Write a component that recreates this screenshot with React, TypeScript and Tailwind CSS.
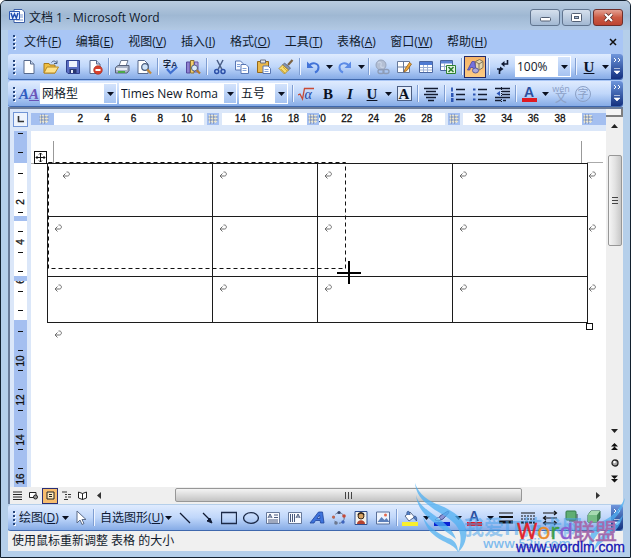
import { type ReactNode } from "react";

function Svg({ children, w = 16, h = 16 }: { children: ReactNode; w?: number; h?: number }) {
  return (
    <svg width={w} height={h} viewBox={`0 0 ${w} ${h}`} className="shrink-0" aria-hidden="true">
      {children}
    </svg>
  );
}

function Tool({ label, children, width = "w-[22px]" }: { label: string; children: ReactNode; width?: string }) {
  return (
    <button type="button" aria-label={label} className={`flex h-[22px] shrink-0 items-center justify-center ${width}`}>
      {children}
    </button>
  );
}

function Caret() {
  return (
    <Svg w={7} h={4}>
      <path d="M0 0h7L3.5 4z" fill="#0a1020" />
    </Svg>
  );
}

function Drop({ label }: { label: string }) {
  return (
    <Tool label={label} width="w-[10px]">
      <Caret />
    </Tool>
  );
}

function Sep() {
  return (
    <span className="flex w-[5px] shrink-0 justify-center">
      <span className="h-[17px] w-px bg-[#7f9ed2] shadow-[1px_0_0_#eef4ff]" />
    </span>
  );
}

function Grip() {
  return (
    <span className="mr-[2px] ml-[5px] flex w-[3px] shrink-0 flex-col gap-[2px]">
      {[0, 1, 2, 3].map((i) => (
        <span key={i} className="h-[2px] w-[2px] bg-[#27477e] shadow-[1px_1px_0_#f4f8ff]" />
      ))}
    </span>
  );
}

function Combo({ label, value, width }: { label: string; value: string; width: string }) {
  return (
    <label aria-label={label} className={`relative flex h-[21px] shrink-0 items-center bg-white ${width}`}>
      <select
        aria-label={label}
        className="h-[21px] w-full appearance-none bg-transparent pl-[2px] text-[12px] leading-normal text-[#10182a] outline-none"
      >
        <option>{value}</option>
      </select>
      <span className="pointer-events-none absolute top-px right-px bottom-px flex w-[12px] items-center justify-center bg-linear-to-b from-[#d3e3fc] to-[#a6c3f1]">
        <Caret />
      </span>
    </label>
  );
}

function Overflow() {
  return (
    <button
      type="button"
      aria-label="工具栏选项"
      className="ml-auto flex w-[12px] shrink-0 flex-col items-center justify-between self-stretch rounded-r-[3px] bg-linear-to-b from-[#6f96dc] to-[#14307f] py-[4px]"
    >
      <Svg w={8} h={5}>
        <path d="M1 0l2 2-2 2M5 0l2 2-2 2" fill="none" stroke="#fff" />
      </Svg>
      <Svg w={8} h={7}>
        <path d="M1 .5h6M1 3h6L4 6z" fill="#fff" stroke="#fff" strokeWidth=".6" />
      </Svg>
    </button>
  );
}

const barStyle =
  "flex items-center rounded-[3px] border-b border-[#3f68ad] bg-linear-to-b from-[#dfebfe] via-[#c0d7fa] to-[#86abe6]";

/* ---------- standard toolbar drawings ---------- */
const page = "M3 1.5h6.500l3.500 3.500v9.500H3z";

const NewIcon = () => (
  <Svg>
    <path d={page} fill="#fff" stroke="#56698c" />
    <path d="M9.500 1.500V5H13" fill="#c9d8ef" stroke="#56698c" />
  </Svg>
);
const OpenIcon = () => (
  <Svg>
    <path d="M1 4.500h5l1 1.500h5v8H1z" fill="#f0bf42" stroke="#a87a1c" />
    <path d="M1 14l3-6h11.500L12 14z" fill="#ffe28a" stroke="#b88a24" />
    <path d="M8.500 3.500c1.500-2 4-2 5 .5M14 1.500v3h-3" fill="none" stroke="#4b6185" />
  </Svg>
);
const SaveIcon = () => (
  <Svg>
    <path d="M1.500 1.500h13v13H3l-1.500-1.500z" fill="#5b6ec2" stroke="#2f3f8d" />
    <path d="M4 2h8v6H4z" fill="#eef2fd" />
    <path d="M4.500 10h7v4h-7z" fill="#28366f" />
    <path d="M6 11h2v3H6z" fill="#e8ecf8" />
  </Svg>
);
const PermissionIcon = () => (
  <Svg>
    <path d={page} fill="#fff" stroke="#56698c" />
    <path d="M9.500 1.500V5H13" fill="#c9d8ef" stroke="#56698c" />
    <circle cx="11" cy="11" r="4.300" fill="#d8402c" stroke="#a52716" strokeWidth=".6" />
    <path d="M8.500 11h5" stroke="#fff" strokeWidth="1.800" />
  </Svg>
);
const PrintIcon = () => (
  <Svg>
    <path d="M5 7l2-5.500h7L12 7z" fill="#fff" stroke="#6a7890" />
    <path d="M1.500 8.500L4 6.500h11v5l-2 2.500H1.500z" fill="#a9b3c6" stroke="#56617a" />
    <path d="M2 9h11v2H2z" fill="#e9edf5" />
    <path d="M4 12h7v2H4z" fill="#4ca848" />
  </Svg>
);
const PreviewIcon = () => (
  <Svg>
    <path d="M2 1.500h6.500l3.500 3.500v9.500H2z" fill="#fff" stroke="#56698c" />
    <circle cx="9" cy="8" r="3.300" fill="#cfe3f8" stroke="#465a7c" strokeWidth="1.200" />
    <path d="M11.300 10.500L15 14.500" stroke="#c58a36" strokeWidth="2.200" />
  </Svg>
);
const SpellIcon = () => (
  <Svg>
    <text x="0" y="8" fontSize="8" fontWeight="700" fontFamily="'Noto Sans CJK SC', sans-serif" fill="#101a33">字</text>
    <text x="8" y="9" fontSize="9" fontWeight="700" fontFamily="'Liberation Sans', sans-serif" fill="#1d3464">A</text>
    <path d="M4 10l3.500 4L14 8" fill="none" stroke="#3f6fd0" strokeWidth="2.200" />
  </Svg>
);
const ResearchIcon = () => (
  <Svg>
    <path d="M1.500 3h3.500v11H1.500z" fill="#8f80cf" stroke="#56489c" />
    <path d="M5.500 1.500H9V14H5.500z" fill="#f2cf70" stroke="#8d7233" />
    <path d="M9.500 3H13v10H9.500z" fill="#b4a6e2" stroke="#6455a4" />
    <circle cx="9.500" cy="9" r="3" fill="#d9ebfb" stroke="#4e5f80" />
    <path d="M11.700 11.300L15 14.500" stroke="#b5792c" strokeWidth="2.200" />
  </Svg>
);
const CutIcon = () => (
  <Svg>
    <path d="M5 1l5 9.500M11 1L6 10.500" stroke="#4b5f86" strokeWidth="1.500" />
    <circle cx="4.700" cy="12.500" r="2" fill="none" stroke="#2c50a8" strokeWidth="1.500" />
    <circle cx="11" cy="12.500" r="2" fill="none" stroke="#2c50a8" strokeWidth="1.500" />
  </Svg>
);
const CopyIcon = () => (
  <Svg>
    <path d="M1.500 2h5l2.500 2.500V11H1.500z" fill="#f4f8ff" stroke="#5877b4" />
    <path d="M7 5.500h5l2.500 2.500v6.500H7z" fill="#fff" stroke="#5877b4" />
    <path d="M8.500 9.500h4M8.500 11.500h4M3 5.500h3M3 7.500h3" stroke="#83a2d9" />
  </Svg>
);
const PasteIcon = () => (
  <Svg>
    <path d="M1.500 2.500h11v11h-11z" fill="#eab84a" stroke="#95691b" />
    <path d="M4.500 1h5v3h-5z" fill="#e2e6ee" stroke="#6a6f7c" />
    <path d="M7 7h5l2.500 2.500v5H7z" fill="#fff" stroke="#5877b4" />
    <path d="M8.500 10.500h4M8.500 12.500h4" stroke="#83a2d9" />
  </Svg>
);
const BrushIcon = () => (
  <Svg>
    <path d="M10 6l4.500-5" stroke="#7c6243" strokeWidth="2.200" />
    <path d="M6.500 4l6 5-2 2-6-5z" fill="#8492ad" stroke="#56637d" strokeWidth=".8" />
    <path d="M4.500 6l6 5-4 4L1 9.500z" fill="#f7dc6e" stroke="#ae8826" strokeWidth=".9" />
    <path d="M3 10l4 4M5 8l4 4" stroke="#c79d31" strokeWidth=".8" />
  </Svg>
);
const UndoIcon = () => (
  <Svg>
    <path d="M4 7c3-4.500 9.500-3 9.500 1.500 0 2-1.200 4-3.500 5" fill="none" stroke="#4273d8" strokeWidth="2" />
    <path d="M2 2.500V9h6.500z" fill="#4273d8" />
  </Svg>
);
const RedoIcon = () => (
  <Svg>
    <path d="M12 7C9 2.500 2.500 4 2.500 8.500c0 2 1.200 4 3.500 5" fill="none" stroke="#5c8be6" strokeWidth="2" />
    <path d="M14 2.500V9H7.500z" fill="#5c8be6" />
  </Svg>
);
const LinkIcon = () => (
  <Svg>
    <circle cx="7" cy="6" r="5" fill="#b4bfd3" stroke="#98a5bd" />
    <path d="M4 4c2-2 4 0 3 2s1 3 3 2" fill="none" stroke="#c9d4e6" strokeWidth="1.300" />
    <rect x="4" y="10.500" width="6" height="4" rx="2" fill="none" stroke="#8e9cb6" strokeWidth="1.300" />
    <rect x="9" y="10.500" width="6" height="4" rx="2" fill="none" stroke="#8e9cb6" strokeWidth="1.300" />
  </Svg>
);
const DrawTableIcon = () => (
  <Svg>
    <path d="M1.500 2.500h12v11h-12zM1.500 8h12M7.500 2.500v11" fill="#fff" stroke="#66799b" />
    <path d="M8 13l1-3 4.500-6.500 2 1.500-4.500 6.500z" fill="#f0a93b" stroke="#96601a" strokeWidth=".8" />
  </Svg>
);
const InsertTableIcon = () => (
  <Svg>
    <path d="M1.500 2.500h13v11h-13z" fill="#fff" stroke="#4a66a0" />
    <path d="M2 3h12v3H2z" fill="#4e7ad2" />
    <path d="M2 8.500h12M2 11h12M5.500 6v7M9.500 6v7" stroke="#9db1d6" />
  </Svg>
);
const ExcelIcon = () => (
  <Svg>
    <path d="M.5 1.500h12v10H.5z" fill="#fff" stroke="#4a66a0" />
    <path d="M1 2h11v2.500H1z" fill="#5e86d6" />
    <path d="M1 7.500h11M4.500 4v7" stroke="#9db1d6" />
    <path d="M6.500 6.500h9v8h-9z" fill="#e4f4e2" stroke="#2d8030" />
    <path d="M8.500 8l5 5M13.500 8l-5 5" stroke="#2d8030" strokeWidth="1.600" />
  </Svg>
);
const DrawingIcon = () => (
  <Svg w={18} h={17}>
    <path d="M9.500 3.500l4-2 3.500 2v6l-4.500 3-3.500-3z" fill="#e4d6ae" stroke="#85775a" />
    <path d="M9.500 3.500l3.500 2.500 4-2.500M13 6v6" fill="none" stroke="#85775a" />
    <path d="M1.500 12L6 3.500h2.500L10 12H7.500l-.5-2.500H4.500L3.800 12z" fill="#7472dc" stroke="#4b49a4" strokeWidth=".8" />
    <ellipse cx="9.500" cy="12.500" rx="3" ry="2.500" fill="#a9a8dc" stroke="#5a5a9a" />
  </Svg>
);
const MarksIcon = () => (
  <Svg>
    <path d="M13.500 1v4H9" fill="none" stroke="#101a33" strokeWidth="1.600" />
    <path d="M10.500 2v6L7 5z" fill="#101a33" />
    <path d="M7 10h-4M5.500 10v5" stroke="#101a33" strokeWidth="1.600" />
    <path d="M6 7.500v5L9.500 10z" fill="#101a33" />
  </Svg>
);

function Letter({ children, className = "" }: { children: ReactNode; className?: string }) {
  return <span className={`font-['Liberation_Serif',serif] text-[15px] leading-[16px] font-bold text-[#0b1224] ${className}`}>{children}</span>;
}

function ListIcon({ marks }: { marks: string }) {
  return (
    <Svg>
      <path d="M6 3.500h9M6 8.500h9M6 13.500h9" stroke="#141c30" strokeWidth="1.400" />
      <path d={marks} stroke="#2c55b4" strokeWidth="1.800" />
    </Svg>
  );
}

function ColorA() {
  return (
    <span className="flex w-[15px] flex-col items-center">
      <span className="font-['Liberation_Sans',sans-serif] text-[14px] leading-[12px] font-bold text-[#2c4f9e]">A</span>
      <span className="h-[4px] w-full bg-[#e01a22]" />
    </span>
  );
}

/* ---------- menu ---------- */
const menus: [string, string][] = [
  ["文件", "F"],
  ["编辑", "E"],
  ["视图", "V"],
  ["插入", "I"],
  ["格式", "O"],
  ["工具", "T"],
  ["表格", "A"],
  ["窗口", "W"],
  ["帮助", "H"],
];

/* ---------- rulers ---------- */
const rulerNumbers = ["2", "4", "6", "8", "10", "", "14", "16", "18", "20", "22", "24", "26", "28", "", "32", "34", "36", "38", "4"];
const sideNumbers = ["", "2", "4", "6", "", "10", "12", "14", "16"];

function ColumnMarker({ at }: { at: string }) {
  return (
    <span className={`absolute top-0 flex h-[12px] border-x-[3px] border-[#dbe7f9] bg-[#a4bff0] ${at}`}>
      <Svg w={12} h={12}>
        <path d="M2 2.500h8M2 5.500h8M2 8.500h8M2.500 2v8M5.500 2v8M8.500 2v8" stroke="#e8e4d0" strokeWidth="1.200" />
        <path d="M3.500 1v10M6.500 1v10M1 4h10M1 7h10" stroke="#7b87a0" strokeWidth=".6" />
      </Svg>
    </span>
  );
}

function Mark() {
  return (
    <Svg w={8} h={8}>
      <path d="M4.500 1h1c2.500 0 2.500 4 0 4H1M3.500 2.500L1 5l2.500 2.500" fill="none" stroke="#6c6c6c" />
    </Svg>
  );
}

function MoveHandle() {
  return (
    <button type="button" aria-label="移动表格" className="absolute top-[20px] left-[3px] border border-[#111] bg-white">
      <Svg w={11} h={11}>
        <path d="M5.500 1v9M1 5.500h9M4 2.500L5.500 1 7 2.500M4 8.500L5.500 10 7 8.500M2.500 4L1 5.500 2.500 7M8.500 4L10 5.500 8.500 7" fill="none" stroke="#111" />
      </Svg>
    </button>
  );
}

function Document() {
  const rows = ["h-[53px]", "h-[60px]", "h-[46px]"];
  return (
    <main className="relative min-w-0 flex-1 overflow-hidden bg-white pt-[32px] pl-[16px] text-[12px]">
      <span className="absolute top-[10px] left-[22px] h-[22px] w-px bg-[#999]" />
      <span className="absolute top-[32px] left-0 h-px w-[16px] bg-[#aaa]" />
      <span className="absolute top-[10px] right-[24px] h-[22px] w-px bg-[#999]" />
      <span className="absolute top-[31px] right-[3px] h-px w-[16px] bg-[#aaa]" />
      <MoveHandle />
      <table className="w-full table-fixed border-collapse">
        <colgroup>
          <col className="w-[165px]" />
          <col className="w-[105px]" />
          <col />
          <col />
          <col className="w-[19px]" />
        </colgroup>
        <tbody>
          {rows.map((height, r) => (
            <tr key={height} className={height}>
              {[0, 1, 2, 3].map((c) => (
                <td key={c} className={`border border-[#1c1c1c] pt-[7px] align-top ${r === 0 && c === 0 ? "pl-[14px]" : "pl-[6px]"}`}>
                  <Mark />
                </td>
              ))}
              <td className="pt-[7px] align-top">
                <Mark />
              </td>
            </tr>
          ))}
        </tbody>
      </table>
      <div className="pt-[7px] pl-[7px]">
        <Mark />
      </div>
      <span className="absolute top-[192px] right-[13px] h-[7px] w-[7px] border border-[#111] bg-white" />
      <svg className="absolute top-[30px] left-[16px]" width="316" height="124" aria-hidden="true">
        <rect x="1.500" y="1.500" width="297" height="106" fill="none" stroke="#111" strokeDasharray="4 3" />
        <path d="M302 100v23M290 112h24" stroke="#000" strokeWidth="2" />
      </svg>
    </main>
  );
}

function Workspace() {
  return (
    <section className="flex min-h-0 flex-1 border-t-2 border-l-2 border-[#6b7c99] bg-[#dbe7f9]">
      <div className="flex min-w-0 flex-1 flex-col">
        <div className="flex h-[22px] shrink-0 items-center pb-[2px] pl-[3px]">
          <button type="button" aria-label="制表符" className="mr-[3px] flex h-[15px] w-[15px] shrink-0 items-center justify-center border border-[#7195d6] bg-[#edf3fd]">
            <Svg w={7} h={7}>
              <path d="M1.500 0v5.500H7" fill="none" stroke="#333" strokeWidth="1.600" />
            </Svg>
          </button>
          <div className="relative h-[12px] min-w-0 flex-1 bg-[#a4bff0] pr-[24px] pl-[23px]">
            <div className="h-full bg-white" />
            <div className="absolute inset-y-0 right-[6px] left-[36px] grid grid-cols-20 text-center font-['Liberation_Sans',sans-serif] text-[10px] leading-[12px] text-[#111] [-webkit-text-stroke:0.300px_#111]">
              {rulerNumbers.map((n, i) => (
                <span key={i}>{n}</span>
              ))}
            </div>
            <ColumnMarker at="left-[7px] border-none" />
            <ColumnMarker at="left-[30%]" />
            <ColumnMarker at="left-[48%] border-none" />
            <ColumnMarker at="left-[72%]" />
            <ColumnMarker at="right-[12px] border-none" />
          </div>
        </div>
        <div className="flex min-h-0 flex-1">
          <div className="relative mr-[4px] ml-[4px] flex w-[13px] shrink-0 flex-col overflow-hidden bg-[#a4bff0]">
            <span className="absolute top-[32px] h-[157px] w-full bg-white" />
            <span className="absolute top-[85px] h-[5px] w-full bg-[#a4bff0]" />
            <span className="absolute top-[2px] left-[4px] h-px w-[5px] bg-[#111]" />
            <div className="relative mt-[12px] mb-[-12px] grid flex-1 grid-rows-9">
              {sideNumbers.map((n, i) => (
                <span key={i} className="flex flex-col items-center py-[9px]">
                  <span className="h-px w-[5px] bg-[#111]" />
                  <span className="flex flex-1 items-center justify-center">
                    <span className="h-[10px] -rotate-90 text-center font-['Liberation_Sans',sans-serif] text-[10px] leading-[10px] text-[#111] [-webkit-text-stroke:0.300px_#111]">
                      {n}
                    </span>
                  </span>
                  <span className="h-px w-[5px] bg-[#111]" />
                </span>
              ))}
            </div>
            <span className="absolute top-[145px] h-[5px] w-full bg-[#a4bff0]" />
          </div>
          <Document />
        </div>
        <div className="flex h-[17px] shrink-0 items-center bg-[#efefef]">
          <Tool label="普通视图" width="w-[15px]">
            <Svg w={9} h={9}><path d="M0 1h9M0 3.500h9M0 6h9M0 8.500h9" stroke="#222" /></Svg>
          </Tool>
          <Tool label="Web 版式" width="w-[17px]">
            <Svg w={9} h={9}><path d="M.5 1.500h6.500v5H.5z" fill="#fff" stroke="#222" /><circle cx="6.500" cy="6" r="2" fill="#999" stroke="#222" /></Svg>
          </Tool>
          <button type="button" aria-label="页面视图" className="flex h-[16px] w-[16px] items-center justify-center border border-[#2b2f74] bg-[#f7bd6e]">
            <Svg w={9} h={9}><path d="M1 1h7v7H1z" fill="#ffe9bd" stroke="#222" /><path d="M3 3.500h3M3 5.500h3" stroke="#222" /></Svg>
          </button>
          <Tool label="大纲视图" width="w-[16px]">
            <Svg w={9} h={9}><path d="M0 1h5M3 3.500h2M6 3.500h3M3 6h2M6 6h3M2 8.500h4" stroke="#333" /></Svg>
          </Tool>
          <Tool label="阅读版式" width="w-[16px]">
            <Svg w={9} h={9}><path d="M.5 1l4 1.500 4-1.500v6l-4 1.500-4-1.500zM4.500 2.500v6" fill="#fff" stroke="#222" /></Svg>
          </Tool>
          <Tool label="向左滚动" width="w-[17px]">
            <Svg w={4} h={7}><path d="M4 0v7L0 3.500z" fill="#333" /></Svg>
          </Tool>
          <div className="flex h-full min-w-0 flex-1 pr-[67px] pl-[68px]">
            <div className="mt-px mb-[2px] flex flex-1 items-center justify-center gap-[2px] rounded-[2px] border border-[#979797] bg-linear-to-b from-[#f4f4f4] via-[#dcdcdc] to-[#c4c4c4]">
              {[0, 1, 2].map((i) => (
                <span key={i} className="h-[7px] w-px bg-[#444]" />
              ))}
            </div>
          </div>
          <Tool label="向右滚动" width="w-[17px]">
            <Svg w={4} h={7}><path d="M0 0v7l4-3.500z" fill="#333" /></Svg>
          </Tool>
        </div>
      </div>
      <div className="flex w-[17px] shrink-0 flex-col items-center bg-[#efefef]">
        <span className="h-[8px] w-full border-r-2 border-b-2 border-[#7e7e7e] bg-[#f5f5f5]" />
        <button type="button" aria-label="向上滚动" className="flex h-[18px] items-center">
          <Svg w={7} h={4}><path d="M0 4h7L3.500 0z" fill="#222" /></Svg>
        </button>
        <div className="mt-[20px] flex h-[91px] w-[14px] flex-col items-center justify-center gap-[2px] rounded-[2px] border border-[#979797] bg-linear-to-r from-[#f5f5f5] via-[#e2e2e2] to-[#c8c8c8]">
          {[0, 1, 2].map((i) => (
            <span key={i} className="h-px w-[6px] bg-[#444]" />
          ))}
        </div>
        <div className="mt-auto flex flex-col items-center pb-[17px]">
          <button type="button" aria-label="向下滚动" className="flex h-[17px] items-center">
            <Svg w={7} h={4}><path d="M0 0h7L3.500 4z" fill="#222" /></Svg>
          </button>
          <button type="button" aria-label="前一页" className="flex h-[16px] items-center">
            <Svg w={7} h={8}><path d="M0 3.500h7L3.500 0zM0 7h7L3.500 3.500z" fill="#111" /></Svg>
          </button>
          <button type="button" aria-label="选择浏览对象" className="flex h-[16px] items-center">
            <Svg w={8} h={8}><circle cx="4" cy="4" r="3" fill="#aaa" stroke="#222" strokeWidth="1.300" /><circle cx="3.500" cy="3" r="1.200" fill="#fff" /></Svg>
          </button>
          <button type="button" aria-label="下一页" className="flex h-[16px] items-center">
            <Svg w={7} h={8}><path d="M0 0.500h7L3.500 4zM0 4h7L3.500 7.500z" fill="#111" /></Svg>
          </button>
        </div>
      </div>
    </section>
  );
}

function DrawBar() {
  return (
    <div className={`mt-px h-[26px] shrink-0 text-[12px] text-[#0d1a36] ${barStyle}`}>
      <Grip />
      <button type="button" className="ml-px flex w-[50px] shrink-0 items-center justify-between whitespace-nowrap">
        <span>绘图(<u>D</u>)</span>
        <Caret />
      </button>
      <Tool label="选择对象">
        <Svg><path d="M5 1v12l3-3 2 4.500 2-1L10 9.500h4z" fill="#fff" stroke="#5a6a88" /></Svg>
      </Tool>
      <Sep />
      <button type="button" className="mr-[2px] ml-[4px] flex w-[72px] shrink-0 items-center justify-between whitespace-nowrap">
        <span>自选图形(<u>U</u>)</span>
        <Caret />
      </button>
      <Tool label="直线"><Svg><path d="M3 3l10 10" stroke="#111b33" strokeWidth="1.200" /></Svg></Tool>
      <Tool label="箭头"><Svg><path d="M4 3l6 6" stroke="#111b33" strokeWidth="1.200" /><path d="M13 13l-5-2 3-3z" fill="#111b33" stroke="#111b33" /></Svg></Tool>
      <Tool label="矩形"><Svg><path d="M.5 2.500h15v11H.5z" fill="none" stroke="#1c2a48" strokeWidth="1.300" /></Svg></Tool>
      <Tool label="椭圆"><Svg><ellipse cx="8" cy="8" rx="7.400" ry="5.300" fill="none" stroke="#1c2a48" strokeWidth="1.300" /></Svg></Tool>
      <Tool label="文本框">
        <Svg>
          <path d="M1.500 2.500h13v11h-13z" fill="#f8faff" stroke="#66799b" />
          <path d="M3 8l2-4 2 4M4 7h2M9 5h4M9 7.500h4M3 10h10M3 12h10" fill="none" stroke="#33466e" strokeWidth=".9" />
        </Svg>
      </Tool>
      <Tool label="竖排文本框">
        <Svg>
          <path d="M1.500 2.500h13v11h-13z" fill="#f8faff" stroke="#66799b" />
          <path d="M9 8l2-4 2 4M10 7h2M3.500 4v8M5.500 4v8M7.500 4v8" fill="none" stroke="#33466e" strokeWidth=".9" />
        </Svg>
      </Tool>
      <Tool label="艺术字">
        <Svg>
          <path d="M1 13L9.500 2h4L15 13h-3.500l-.3-2.500H6.500L5 13zM8 8.500h3L10.600 5z" fill="#3e73dc" stroke="#1f449a" strokeWidth=".8" fillRule="evenodd" />
        </Svg>
      </Tool>
      <Tool label="组织结构图">
        <Svg>
          <circle cx="8" cy="8" r="5.200" fill="none" stroke="#5f6f8c" strokeDasharray="3 2" />
          <circle cx="8" cy="2.500" r="1.600" fill="#38466a" /><circle cx="13" cy="6" r="1.800" fill="#c44a38" />
          <circle cx="12" cy="12" r="1.700" fill="#3e64bd" /><circle cx="5" cy="13" r="1.800" fill="#6c7890" />
          <circle cx="2.500" cy="7" r="1.600" fill="#bf6650" />
        </Svg>
      </Tool>
      <Tool label="剪贴画">
        <Svg>
          <path d="M2 1.500h12v13H2z" fill="#f4f3ed" stroke="#2f4e8f" />
          <circle cx="8" cy="6" r="3" fill="#d7a363" stroke="#3b2a1b" />
          <path d="M4 14c0-5 8-5 8 0z" fill="#b6432f" />
          <path d="M5 5c1-3 5-3 6 0" fill="none" stroke="#2d211a" strokeWidth="1.500" />
        </Svg>
      </Tool>
      <Tool label="图片">
        <Svg>
          <path d="M1.500 2h13v12h-13z" fill="#eef4fd" stroke="#5a7099" />
          <path d="M2.500 12l4-5 3 3 2-2 3 4z" fill="#5b7fba" />
          <circle cx="10.500" cy="5" r="1.500" fill="#e5694e" />
        </Svg>
      </Tool>
      <Sep />
      <Tool label="填充颜色">
        <Svg>
          <path d="M3 6l5-4 4.500 5L7 11z" fill="#fff" stroke="#56698c" />
          <path d="M5 5c-1-5 3-5 3 0M12.500 6c2 0 2.500 2 2 5-1-2-2-2-3-3z" fill="#547fc5" stroke="#38588f" strokeWidth=".8" />
          <path d="M0 12h16v4H0z" fill="#f8ef2c" />
        </Svg>
      </Tool>
      <Drop label="填充颜色选项" />
      <Tool label="线条颜色">
        <Svg>
          <path d="M4 11l2-5 8-5c1 0 1 1 .5 2L9 9z" fill="#8b94d6" stroke="#4a5596" />
          <path d="M1 10c2-3 4-3 6-1-1 2-3 2-6 1z" fill="#eef2ff" stroke="#4a5596" strokeWidth=".8" />
          <path d="M0 12h16v4H0z" fill="#0a24d4" />
        </Svg>
      </Tool>
      <Drop label="线条颜色选项" />
      <Tool label="字体颜色"><ColorA /></Tool>
      <Drop label="字体颜色选项" />
      <Tool label="线型"><Svg><path d="M1 3h14" stroke="#111" /><path d="M1 7h14" stroke="#111" strokeWidth="2" /><path d="M1 12h14" stroke="#111" strokeWidth="3" /></Svg></Tool>
      <Tool label="虚线线型"><Svg><path d="M1 3h14" stroke="#111" /><path d="M1 6h14M1 9h14" stroke="#111" strokeDasharray="2 1" /><path d="M1 12.500h14" stroke="#111" strokeWidth="2" strokeDasharray="3 1" /></Svg></Tool>
      <Tool label="箭头样式"><Svg><path d="M1 3h14M12 1l2.500 2L12 5M1 8h14M4 6L1.500 8 4 10M1 13h14M12 11l2.500 2-2.500 2M4 11l-2.500 2L4 15" fill="none" stroke="#111" strokeWidth="1.200" /></Svg></Tool>
      <Tool label="阴影样式"><Svg><path d="M5 4h9v8H5z" fill="#7d8aa0" /><rect x="2" y="1" width="10" height="9" rx="1" fill="#5fae73" stroke="#347a4b" /></Svg></Tool>
      <Tool label="三维效果样式"><Svg><path d="M2 5l3-4h9v7l-3 4H2z" fill="#3f8453" stroke="#2d6a40" /><path d="M2 5h9v7H2z" fill="#74bd85" /><path d="M2 5l3-4h9l-3 4z" fill="#a7dbb1" /></Svg></Tool>
      <Overflow />
    </div>
  );
}

function Watermark() {
  return (
    <div className="pointer-events-none absolute right-[3px] bottom-0 h-[76px] w-[218px] overflow-hidden font-['Open_Sans','Noto_Sans_CJK_SC',sans-serif]">
      <svg className="absolute inset-0" width="218" height="76" aria-hidden="true">
        <g fill="#4fb0f2" opacity=".75">
          <path d="M6 2C10 14 20 20 30 24C48 31 60 42 57 56C56 63 53 68 49 71C53 60 53 50 45 42C38 35 28 31 22 26C12 19 7 12 6 2Z" />
          <path d="M7 14C9 23 17 28 25 34C36 42 44 49 47 58C38 51 30 46 23 40C13 32 8 24 7 14Z" />
          <path d="M14 36C20 47 32 55 42 58C47 61 49 66 49 71C46 65 40 63 34 60C24 55 17 48 14 36Z" />
          <path d="M216 17C209 31 202 36 194 40C184 46 178 54 181 70C183 58 189 52 197 45C207 38 214 29 216 17Z" />
          <path d="M214 34C208 42 203 46 197 51C190 57 186 62 185 70C190 62 195 60 201 55C208 49 212 43 214 34Z" />
        </g>
      </svg>
      <div className="absolute top-[34px] left-[55px] text-[20px] leading-[26px] font-bold whitespace-nowrap text-[#4ba3ec]/55">我爱IT技术网</div>
      <div className="absolute top-[54px] left-[74px] text-[13px] leading-[17px] font-semibold whitespace-nowrap text-[#4ba3ec]/70">www.52ij.com</div>
      <div className="absolute right-[10px] bottom-[14px] text-[22px] leading-[26px] whitespace-nowrap [-webkit-text-stroke:0.500px]">
        <span className="text-[#e0252b]">W</span>
        <span className="text-[#e98b2c]">o</span>
        <span className="text-[#3f9e42]">r</span>
        <span className="text-[#8a5ed0]">d</span>
        <span className="text-[#a56aac]">联盟</span>
      </div>
      <div className="absolute right-[2px] bottom-px font-['Liberation_Sans',sans-serif] text-[14px] leading-[18px] whitespace-nowrap text-[#1515b4] [-webkit-text-stroke:0.300px]">www.wordlm.com</div>
    </div>
  );
}

export default function App() {
  return (
    <div className="relative flex min-h-screen flex-col overflow-hidden rounded-t-[6px] border border-[#12202e] bg-[#b5cfea] px-[7px] pb-[6px] font-['Open_Sans','Noto_Sans_CJK_SC',sans-serif] text-[12px] leading-[18px] text-[#101a2c]">
      <header className="-mx-[7px] flex h-[29px] shrink-0 items-center bg-linear-to-b from-[#b9cce0] via-[#9fb8d3] to-[#b2c9e4] pr-[7px] pl-[8px]">
        <Svg w={17} h={16}>
          <path d="M5 1.500h8l2.500 2.500v10.500H5z" fill="#fff" stroke="#3a5da5" />
          <path d="M11 7h3M11 9h3M7 12h7" stroke="#7b97cf" />
          <path d="M.5 3.500h10v8H.5z" fill="#e8f0ff" stroke="#2b57b4" />
          <path d="M2 5l1.700 5L5.500 6l1.800 4L9 5" fill="none" stroke="#1e4cb0" strokeWidth="1.500" />
        </Svg>
        <h1 className="ml-[3px] pt-[4px]">文档 1 - Microsoft Word</h1>
        <div className="ml-auto flex gap-[2px] pt-[4px]">
          <button type="button" aria-label="最小化" className="flex h-[17px] w-[30px] items-center justify-center rounded-[3px] border border-[#61758f] bg-linear-to-b from-[#d5e0ed] to-[#a2b8d2]">
            <Svg w={11} h={9}><rect x=".5" y="4.500" width="10" height="3.500" rx="1" fill="#fff" stroke="#525f73" /></Svg>
          </button>
          <button type="button" aria-label="最大化" className="flex h-[17px] w-[29px] items-center justify-center rounded-[3px] border border-[#61758f] bg-linear-to-b from-[#d5e0ed] to-[#a2b8d2]">
            <Svg w={11} h={9}><rect x=".5" y=".5" width="10" height="8" rx="1" fill="#fff" stroke="#525f73" /><rect x="3.500" y="3.500" width="4" height="2" fill="#a9bbd2" stroke="#525f73" /></Svg>
          </button>
          <button type="button" aria-label="关闭" className="flex h-[17px] w-[30px] items-center justify-center rounded-[3px] border border-[#6e2e2a] bg-linear-to-b from-[#e2a093] via-[#cb5a44] to-[#bd4431]">
            <Svg w={11} h={9}><path d="M2 1l7 7M9 1L2 8" stroke="#5c2a25" strokeWidth="3.600" /><path d="M2 1l7 7M9 1L2 8" stroke="#fff" strokeWidth="2.200" /></Svg>
          </button>
        </div>
      </header>

      <nav className="flex h-[24px] shrink-0 items-center bg-[#a9c6f5]">
        <Grip />
        <div className="flex w-[475px] justify-between">
          {menus.map(([name, key]) => (
            <button type="button" key={key} className="px-[6px] whitespace-nowrap">
              {name}(<u>{key}</u>)
            </button>
          ))}
        </div>
        <button type="button" aria-label="关闭文档" className="mr-[6px] ml-auto">
          <Svg w={8} h={8}><path d="M1 1l6 6M7 1L1 7" stroke="#111" strokeWidth="1.500" /></Svg>
        </button>
      </nav>

      <div className="flex shrink-0 flex-col gap-px bg-[#a9c6f5]">
        <div className={`h-[26px] ${barStyle}`}>
          <Grip />
          <Tool label="新建"><NewIcon /></Tool>
          <Tool label="打开"><OpenIcon /></Tool>
          <Tool label="保存"><SaveIcon /></Tool>
          <Tool label="权限"><PermissionIcon /></Tool>
          <Sep />
          <Tool label="打印"><PrintIcon /></Tool>
          <Tool label="打印预览"><PreviewIcon /></Tool>
          <Sep />
          <Tool label="拼写和语法"><SpellIcon /></Tool>
          <Tool label="信息检索"><ResearchIcon /></Tool>
          <Sep />
          <Tool label="剪切"><CutIcon /></Tool>
          <Tool label="复制"><CopyIcon /></Tool>
          <Tool label="粘贴"><PasteIcon /></Tool>
          <Tool label="格式刷"><BrushIcon /></Tool>
          <Sep />
          <Tool label="撤消"><UndoIcon /></Tool>
          <Drop label="撤消列表" />
          <Tool label="恢复"><RedoIcon /></Tool>
          <Drop label="恢复列表" />
          <Sep />
          <Tool label="插入超链接"><LinkIcon /></Tool>
          <Tool label="表格和边框"><DrawTableIcon /></Tool>
          <Tool label="插入表格"><InsertTableIcon /></Tool>
          <Tool label="插入 Excel 工作表"><ExcelIcon /></Tool>
          <Sep />
          <button type="button" aria-label="绘图" aria-pressed="true" className="flex h-[22px] w-[22px] shrink-0 items-center justify-center border border-[#242a6a] bg-linear-to-b from-[#f6b467] to-[#fccb84]">
            <DrawingIcon />
          </button>
          <Sep />
          <Tool label="显示编辑标记"><MarksIcon /></Tool>
          <span className="w-[2px] shrink-0" />
          <Combo label="显示比例" value="100%" width="w-[56px]" />
          <span className="w-[2px] shrink-0" />
          <Sep />
          <Tool label="下划线"><Letter className="underline">U</Letter></Tool>
          <Drop label="下划线选项" />
          <Overflow />
        </div>
        <div className={`h-[26px] ${barStyle}`}>
          <Grip />
          <Tool label="格式窗格">
            <span className="font-['Liberation_Serif',serif] text-[15px] leading-[16px] font-bold text-[#2f5bc0] italic">
              A<span className="text-[#6a54b8] underline">A</span>
            </span>
          </Tool>
          <Combo label="样式" value="网格型" width="w-[77px]" />
          <span className="w-[2px] shrink-0" />
          <Combo label="字体" value="Times New Roma" width="w-[118px]" />
          <span className="w-[2px] shrink-0" />
          <Combo label="字号" value="五号" width="w-[49px]" />
          <span className="w-[2px] shrink-0" />
          <Sep />
          <Tool label="公式">
            <Svg>
              <path d="M0 9l2-1 2.500 5L6.500 2.500H16" fill="none" stroke="#c94a34" strokeWidth="1.300" />
              <text x="6.500" y="13" fontSize="14" fontFamily="'Liberation Serif', serif" fontStyle="italic" fill="#2447a4">α</text>
            </Svg>
          </Tool>
          <Tool label="加粗"><Letter>B</Letter></Tool>
          <Tool label="倾斜"><Letter className="italic">I</Letter></Tool>
          <Tool label="下划线"><Letter className="underline">U</Letter></Tool>
          <Drop label="下划线样式" />
          <Tool label="字符边框">
            <span className="flex h-[15px] w-[15px] items-center justify-center border border-[#4c5e82] bg-[#e3ecfb]">
              <Letter>A</Letter>
            </span>
          </Tool>
          <Sep />
          <Tool label="居中"><Svg><path d="M1 2.500h14M3 5.500h10M1 8.500h14M3 11.500h10M5 14.500h6" stroke="#141c30" strokeWidth="1.500" /></Svg></Tool>
          <Sep />
          <Tool label="编号"><ListIcon marks="M2 1.500v4M1 8h2.500M1 10h2.500M1 13h2.500M1 15h2.500" /></Tool>
          <Tool label="项目符号"><ListIcon marks="M1 3.500h2.500M1 8.500h2.500M1 13.500h2.500" /></Tool>
          <Tool label="增加缩进量">
            <Svg>
              <path d="M1 2.500h15M8 5.500h8M8 8.500h8M1 11.500h15M1 14.500h6M9 14.500h3" stroke="#141c30" strokeWidth="1.400" />
              <path d="M6 5v5L2.500 7.500z" fill="#2c55b4" />
              <path d="M7.500 1v15" stroke="#141c30" strokeDasharray="1 1" />
            </Svg>
          </Tool>
          <Sep />
          <Tool label="字体颜色"><ColorA /></Tool>
          <Drop label="字体颜色列表" />
          <Tool label="拼音指南">
            <span className="flex flex-col items-center text-[#8ba0c6]">
              <span className="text-[9px] leading-[7px]">wén</span>
              <span className="text-[12px] leading-[11px]">文</span>
            </span>
          </Tool>
          <Tool label="带圈字符">
            <span className="flex h-[16px] w-[16px] items-center justify-center rounded-full border border-[#8ba0c6] text-[11px] leading-[14px] text-[#8ba0c6]">字</span>
          </Tool>
          <Overflow />
        </div>
      </div>

      <Workspace />
      <DrawBar />

      <footer className="flex h-[20px] shrink-0 items-center bg-[#f0f0f0] px-[4px]">使用鼠标重新调整 表格 的大小</footer>
      <Watermark />
    </div>
  );
}
